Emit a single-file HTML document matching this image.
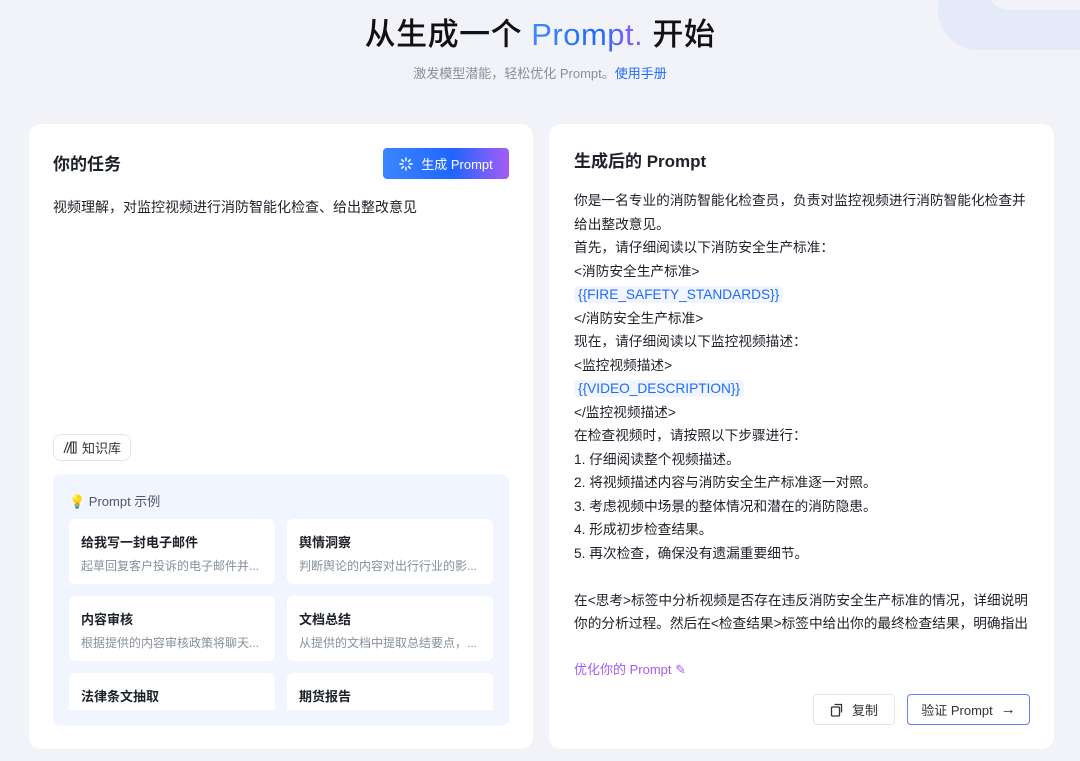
<!DOCTYPE html>
<html><head><meta charset="utf-8"><style>
*{margin:0;padding:0;box-sizing:border-box}
body{width:1080px;height:761px;background:#f2f3f8;font-family:"Liberation Sans","Noto Sans CJK SC",sans-serif;color:#1d2129;position:relative;overflow:hidden}
.blob{position:absolute;left:938px;top:-30px;width:220px;height:80px;border-radius:40px;background:#e4eaf7;}
.blob2{position:absolute;left:985px;top:-40px;width:160px;height:50px;border-radius:30px;background:#f2f3f8}
h1{position:absolute;top:9px;width:100%;text-align:center;font-size:31px;font-weight:500;color:#111;letter-spacing:0.5px}
h1 span{background:linear-gradient(90deg,#3e8bff,#1f6bff 60%,#a55cf5);-webkit-background-clip:text;color:transparent}
.sub{position:absolute;top:63px;width:100%;text-align:center;font-size:13px;color:#86909c}
.sub a{color:#1f6bff}
.card{position:absolute;top:124px;height:625px;background:#fff;border-radius:12px}
.l{left:29px;width:504px}.r{left:549px;width:505px}
.title{position:absolute;left:24px;top:26px;font-size:17px;font-weight:600}
.gen{position:absolute;left:354px;top:24px;width:126px;height:31px;border-radius:4px;background:linear-gradient(90deg,#3c86ff,#1f66ff 55%,#a65cf7);color:#fff;font-size:13px;display:flex;align-items:center;justify-content:center;gap:8px}
.task{position:absolute;left:24px;top:73px;font-size:14px}
.kb{position:absolute;left:24px;top:310px;width:78px;height:27px;border:1px solid #e5e6eb;border-radius:8px;font-size:13px;display:flex;align-items:center;justify-content:center;gap:5px;color:#333}
.ex{position:absolute;left:24px;top:350px;width:456px;height:252px;background:#f0f5ff;border-radius:8px;overflow:hidden}
.exh{position:absolute;left:16px;top:17px;font-size:13px;color:#4e5969}
.it{position:absolute;width:206px;height:65px;background:#fff;border-radius:6px;padding:13px 12px}
.it b{display:block;font-size:13px;font-weight:600;color:#1d2129}
.it i{display:block;font-style:normal;font-size:12px;color:#86909c;margin-top:6px;white-space:nowrap}
.ex .clip{position:absolute;left:0;top:236px;width:100%;height:16px;background:#f0f5ff}
.rt{position:absolute;left:25px;top:23px;font-size:17px;font-weight:600}
.body{position:absolute;left:25px;top:65px;width:458px;font-size:13.7px;line-height:23.5px;color:#1d2129}
.v{color:#1f6bff;background:#f0f5ff;border-radius:4px;padding:1px 4px}
.opt{position:absolute;left:25px;top:535px;font-size:13px;color:#a55cf5}
.btn{position:absolute;top:570px;height:31px;border-radius:4px;font-size:13px;display:flex;align-items:center;justify-content:center;gap:8px;color:#333}
.cp{left:264px;width:82px;border:1px solid #e5e6eb}
.vf{left:358px;width:123px;border:1px solid #6b7cf5}
</style></head><body>
<div class="blob"></div><div class="blob2"></div>
<h1>从生成一个 <span>Prompt.</span> 开始</h1>
<div class="sub">激发模型潜能，轻松优化 Prompt。<a>使用手册</a></div>
<div class="card l">
<div class="title">你的任务</div>
<div class="gen"><svg width="14" height="14" viewBox="0 0 14 14" stroke="#fff" stroke-width="1.5" stroke-linecap="round"><path d="M7 1v2.5M7 10.5V13M1 7h2.5M10.5 7H13M2.8 2.8l1.7 1.7M9.5 9.5l1.7 1.7M2.8 11.2l1.7-1.7M9.5 4.5l1.7-1.7"/></svg>生成 Prompt</div>
<div class="task">视频理解，对监控视频进行消防智能化检查、给出整改意见</div>
<div class="kb"><svg width="14" height="13" viewBox="0 0 14 13" fill="none" stroke="#333" stroke-width="1.1"><path d="M1 12L5 1M4 12L8 1M8 1h5v11H8zM10.5 1v11"/></svg>知识库</div>
<div class="ex">
<div class="exh">💡 Prompt 示例</div>
<div class="it" style="left:16px;top:45px"><b>给我写一封电子邮件</b><i>起草回复客户投诉的电子邮件并...</i></div>
<div class="it" style="left:234px;top:45px"><b>舆情洞察</b><i>判断舆论的内容对出行行业的影...</i></div>
<div class="it" style="left:16px;top:122px"><b>内容审核</b><i>根据提供的内容审核政策将聊天...</i></div>
<div class="it" style="left:234px;top:122px"><b>文档总结</b><i>从提供的文档中提取总结要点，...</i></div>
<div class="it" style="left:16px;top:199px"><b>法律条文抽取</b><i>从合同中抽取法律条文并进行分类</i></div>
<div class="it" style="left:234px;top:199px"><b>期货报告</b><i>根据市场数据生成期货分析报告</i></div>
<div class="clip"></div>
</div>
</div>
<div class="card r">
<div class="rt">生成后的 Prompt</div>
<div class="body">你是一名专业的消防智能化检查员，负责对监控视频进行消防智能化检查并给出整改意见。<br>首先，请仔细阅读以下消防安全生产标准：<br>&lt;消防安全生产标准&gt;<br><span class="v">{{FIRE_SAFETY_STANDARDS}}</span><br>&lt;/消防安全生产标准&gt;<br>现在，请仔细阅读以下监控视频描述：<br>&lt;监控视频描述&gt;<br><span class="v">{{VIDEO_DESCRIPTION}}</span><br>&lt;/监控视频描述&gt;<br>在检查视频时，请按照以下步骤进行：<br>1. 仔细阅读整个视频描述。<br>2. 将视频描述内容与消防安全生产标准逐一对照。<br>3. 考虑视频中场景的整体情况和潜在的消防隐患。<br>4. 形成初步检查结果。<br>5. 再次检查，确保没有遗漏重要细节。<br><br>在&lt;思考&gt;标签中分析视频是否存在违反消防安全生产标准的情况，详细说明你的分析过程。然后在&lt;检查结果&gt;标签中给出你的最终检查结果，明确指出</div>
<div style="position:absolute;left:0;top:512px;width:100%;height:20px;background:#fff"></div>
<div class="opt">优化你的 Prompt ✎</div>
<div class="btn cp"><svg width="14" height="14" viewBox="0 0 14 14" fill="none" stroke="#333" stroke-width="1.3"><rect x="1.5" y="4" width="8" height="9" rx="1"/><path d="M4.5 1.5h7v8"/></svg>复制</div>
<div class="btn vf">验证 Prompt <span style="font-size:15px">→</span></div>
</div>
</body></html>
